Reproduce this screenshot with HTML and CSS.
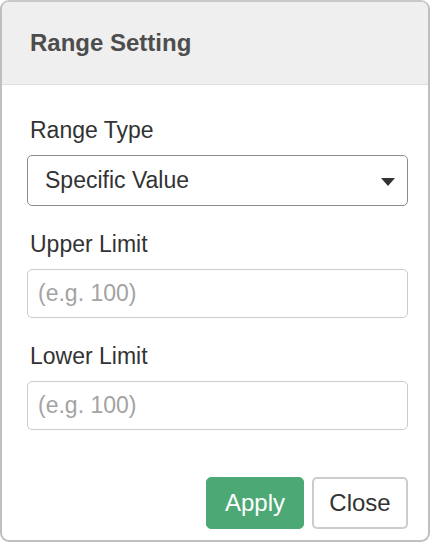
FILE: index.html
```html
<!DOCTYPE html>
<html lang="en">
<head>
<meta charset="utf-8">
<title>Range Setting</title>
<link rel="stylesheet" href="styles.css">
</head>
<body>
<div class="popover">
  <div class="popover-tab"></div>
  <div class="popover-title">Range Setting</div>
  <div class="popover-body">
    <div class="field">
      <label class="field-label">Range Type</label>
      <div class="select">
        <span class="select-value">Specific Value</span>
        <svg class="caret" width="14" height="8" viewBox="0 0 14 8"><path d="M0 0H14L7 8Z" fill="#333"/></svg>
      </div>
    </div>
    <div class="field">
      <label class="field-label">Upper Limit</label>
      <div class="input"><span class="placeholder">(e.g. 100)</span></div>
    </div>
    <div class="field">
      <label class="field-label">Lower Limit</label>
      <div class="input"><span class="placeholder">(e.g. 100)</span></div>
    </div>
    <div class="actions">
      <button class="btn btn-apply">Apply</button>
      <button class="btn btn-close">Close</button>
    </div>
  </div>
</div>
</body>
</html>
```
FILE: styles.css
```css
html, body {
  margin: 0;
  padding: 0;
  background: #ffffff;
  overflow: hidden;
}
body {
  font-family: "Liberation Sans", Arial, sans-serif;
  color: #333333;
}
.popover {
  position: relative;
  box-sizing: border-box;
  width: 430px;
  height: 542px;
  border: 2px solid #bfbfbf;
  border-top-color: #c8c8c8;
  border-radius: 9px;
  background: #ffffff;
  overflow: hidden;
}
.popover-tab {
  position: absolute;
  top: -2px;
  left: 270px;
  width: 90px;
  height: 2px;
  background: #555555;
}
.popover-title {
  height: 83px;
  box-sizing: border-box;
  border-bottom: 1px solid #dedede;
  background: #efefef;
  display: flex;
  align-items: center;
  padding: 0 28px;
  font-size: 24px;
  font-weight: bold;
  color: #4d4d4d;
}
.popover-body {
  padding: 30px 20px 0 25px;
  display: flex;
  flex-direction: column;
}
.field {
  display: flex;
  flex-direction: column;
  margin-bottom: 23px;
}
.field-label {
  font-size: 23px;
  line-height: 30px;
  color: #333333;
  padding-left: 3px;
  margin-bottom: 10px;
}
.select {
  box-sizing: border-box;
  height: 51px;
  border: 1px solid #8c8c8c;
  border-radius: 5px;
  display: flex;
  align-items: center;
  justify-content: space-between;
  padding: 0 12px 0 17px;
  font-size: 23px;
  color: #333333;
}
.caret {
  display: block;
  margin-top: 2px;
}
.input {
  box-sizing: border-box;
  height: 49px;
  border: 1px solid #cccccc;
  border-radius: 5px;
  display: flex;
  align-items: center;
  padding: 0 10px;
  font-size: 23px;
}
.placeholder {
  color: #a3a3a3;
}
.actions {
  display: flex;
  justify-content: flex-end;
  gap: 8px;
  margin-top: 24px;
}
.btn {
  box-sizing: border-box;
  height: 52px;
  border-radius: 5px;
  font-family: "Liberation Sans", Arial, sans-serif;
  font-size: 24px;
  padding: 0;
  cursor: pointer;
}
.btn-apply {
  width: 98px;
  background: #4ca874;
  border: 1px solid #4ca874;
  color: #ffffff;
}
.btn-close {
  width: 96px;
  background: #ffffff;
  border: 2px solid #cccccc;
  color: #333333;
}
```
